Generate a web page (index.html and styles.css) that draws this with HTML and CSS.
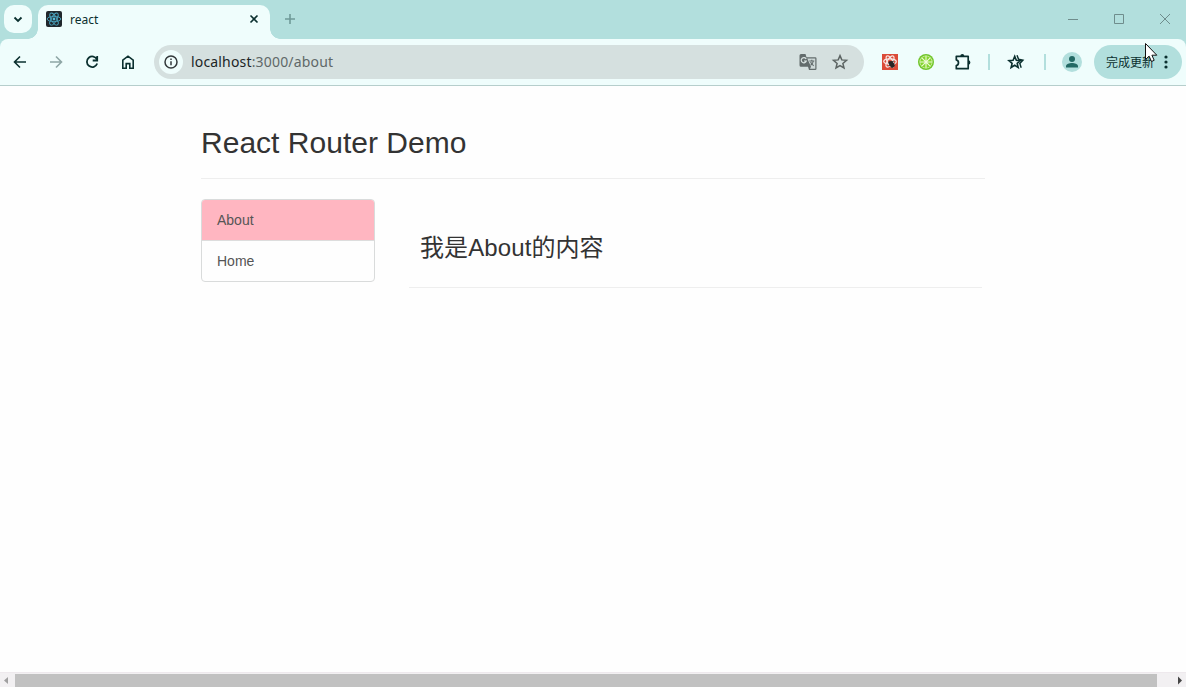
FILE: index.html
```html
<!DOCTYPE html>
<html lang="zh-CN">
<head>
<meta charset="utf-8">
<title>react</title>
<link rel="stylesheet" href="styles.css">
</head>
<body>
<div class="window">
  <header class="titlebar">
    <button class="tab-search" aria-label="Search tabs"><svg width="28" height="28" viewBox="0 0 28 28"><path d="M10.500 12.500 14 16l3.500-3.500" class="stroke2"/></svg></button>
    <div class="tab">
      <svg class="favicon" width="16" height="16" viewBox="0 0 16 16"><rect width="16" height="16" rx="2" fill="#20272c"/><g fill="none" stroke="#4aa5c0" stroke-width=".9"><ellipse cx="8" cy="8" rx="6.800" ry="2.700"/><ellipse cx="8" cy="8" rx="6.800" ry="2.700" transform="rotate(60 8 8)"/><ellipse cx="8" cy="8" rx="6.800" ry="2.700" transform="rotate(120 8 8)"/></g><circle cx="8" cy="8" r="1.400" fill="#58bcd8"/></svg>
      <span class="tab-title">react</span>
      <svg class="tab-close" width="16" height="16" viewBox="0 0 16 16"><path d="m4.500 4.500 7 7m0-7-7 7" class="stroke2 thin"/></svg>
    </div>
    <svg class="new-tab" width="16" height="16" viewBox="0 0 16 16"><path d="M8 3v10M3 8h10" fill="none" stroke="#6f9a98" stroke-width="1.600"/></svg>
    <div class="controls">
      <svg width="46" height="39" viewBox="0 0 46 39"><path d="M18 19.500h10"/></svg>
      <svg width="46" height="39" viewBox="0 0 46 39"><path d="M18.500 14.500h9v9h-9z"/></svg>
      <svg width="46" height="39" viewBox="0 0 46 39"><path d="m18 14 10 10m0-10L18 24"/></svg>
    </div>
  </header>

  <div class="toolbar-backdrop">
  <nav class="toolbar">
    <span class="tool"><svg width="18" height="18" viewBox="0 0 18 18"><path d="M15 9H4M9 3.500 3.500 9 9 14.500" class="stroke2 thin"/></svg></span>
    <span class="tool dim"><svg width="18" height="18" viewBox="0 0 18 18"><path d="M3 9h11M9 3.500 14.500 9 9 14.500" class="stroke2 thin"/></svg></span>
    <span class="tool"><svg width="18" height="18" viewBox="0 0 18 18"><path d="M14 6.500A5.300 5.300 0 1 0 14.200 10.500M14.200 3v4.500H9.700" class="stroke2"/></svg></span>
    <span class="tool"><svg width="18" height="18" viewBox="0 0 18 18"><path d="M3.800 7.200 9 3.200l5.200 4v8.100h-3.400v-4.700H7.200v4.700H3.800z" class="stroke2 thin"/></svg></span>
    <div class="omnibox">
      <span class="site-info"><svg width="16" height="16" viewBox="0 0 16 16"><circle cx="8" cy="8" r="6" fill="none" stroke="#33393b" stroke-width="1.500"/><path d="M8 7.200v4M8 4.500v1.600" stroke="#33393b" stroke-width="1.500"/></svg></span>
      <span class="url">localhost<span class="path">:3000/about</span></span>
      <svg class="translate" width="18" height="18" viewBox="0 0 18 18"><path d="M2 1h4.500l1 3.300h8.700A1.300 1.300 0 0 1 17.500 5.600v10.100a1.300 1.300 0 0 1-1.300 1.300H10l-1-3.300H2A1.500 1.500 0 0 1 .5 12.200V2.500A1.500 1.500 0 0 1 2 1z" fill="#636c6c"/><path d="M8.300 5.500h8v10.300H11l1-2.100z" fill="#cfdad9"/><path d="M7.200 6.100A2.600 2.600 0 1 0 7.300 8H5" fill="none" stroke="#d8e2e0" stroke-width="1.200"/><path d="M10.300 8h5M12.800 6.800V8M14.400 8c-.4 2-1.500 3.300-2.800 4.200M11.600 9c.6 1.500 1.700 2.800 3.100 3.700" fill="none" stroke="#636c6c" stroke-width="1.100"/></svg>
      <svg width="18" height="18" viewBox="0 0 18 18"><path d="m9 2.600 1.800 4.300 4.700.4-3.600 3.100 1.100 4.600-4-2.400L5 15l1.100-4.600-3.600-3.100 4.700-.4z" fill="none" stroke="#5c6463" stroke-width="1.500"/></svg>
    </div>
    <div class="extensions">
      <span class="tool"><svg width="16" height="16" viewBox="0 0 16 16"><rect width="16" height="16" fill="#db4b38"/><g fill="none" stroke="#f9e7e4" stroke-width="1.200"><ellipse cx="8" cy="7.500" rx="6.300" ry="2.600"/><ellipse cx="8" cy="7.500" rx="6.300" ry="2.600" transform="rotate(60 8 7.500)"/><ellipse cx="8" cy="7.500" rx="6.300" ry="2.600" transform="rotate(120 8 7.500)"/></g><ellipse cx="9.700" cy="10.300" rx="2.400" ry="3.400" fill="#292424" transform="rotate(-35 9.700 10.300)"/><path d="m6 9 6-2M6.500 12l6-2.500M9 13.500l4-2M7 7l4 7" stroke="#292424" stroke-width=".8"/></svg></span>
      <span class="tool"><svg width="16" height="16" viewBox="0 0 16 16"><circle cx="8" cy="8" r="8" fill="#70c52a"/><circle cx="8" cy="8" r="6.500" fill="#e5f7ca"/><circle cx="8" cy="8" r="5.900" fill="#84d52e"/><path d="M8 2v12M2 8h12M3.800 3.800l8.400 8.400m0-8.400-8.400 8.400" stroke="#eefad9" stroke-width="1.100"/></svg></span>
      <span class="tool"><svg width="20" height="20" viewBox="0 0 20 20"><path d="M4.800 4.300h11.400v12.400H4.300v-3.200c2.900-.6 2.900-5 0-5.600V4.300z" fill="none" stroke="#0b302f" stroke-width="1.700" stroke-linejoin="round"/><path d="M8.300 4a2 2 0 0 1 4 0zM16.200 8.200a2.200 2.200 0 0 1 0 4.400z" fill="#0b302f"/></svg></span>
      <i class="divider"></i>
      <span class="tool"><svg width="18" height="18" viewBox="0 0 18 18"><path d="m7.700 3.300 1.600 4 4.100.3-3.200 2.800 1 4.100-3.500-2.200-3.600 2.200 1-4.100-3.200-2.800 4.200-.3z" fill="none" stroke="#0b302f" stroke-width="1.600"/><path d="m10 2.200 1.500 3.900 4.500 1.100-3.200 3.300 1.400 4.300" fill="none" stroke="#0b302f" stroke-width="1.400"/></svg></span>
      <i class="divider second"></i>
      <span class="tool"><svg width="20" height="20" viewBox="0 0 20 20"><circle cx="10" cy="10" r="10" fill="#b2dfdd"/><circle cx="10" cy="7" r="3" fill="#236964"/><path d="M4 15.500v-1.400c0-2 3.400-3.100 6-3.100s6 1.100 6 3.100v1.400z" fill="#236964"/></svg></span>
    </div>
    <div class="update"><span>完成更新</span><svg width="4" height="16" viewBox="0 0 4 16"><g fill="#0b302f"><circle cx="2" cy="3" r="1.600"/><circle cx="2" cy="8" r="1.600"/><circle cx="2" cy="13" r="1.600"/></g></svg></div>
  </nav>
  </div>

  <main class="page">
    <h1 class="page-title">React Router Demo</h1>
    <div class="columns">
      <div class="list-group">
        <a class="item active">About</a>
        <a class="item">Home</a>
      </div>
      <section class="panel"><h2>我是About的内容</h2></section>
    </div>
  </main>

  <footer class="scrollbar">
    <svg width="15" height="15" viewBox="0 0 15 15"><path d="M4 7.500 8 4v7z" fill="#a0a0a0"/></svg>
    <div class="thumb"></div>
    <svg class="right" width="15" height="15" viewBox="0 0 15 15"><path d="M11 7.500 7 3.500v8z" fill="#454545"/></svg>
  </footer>
  <svg class="cursor" width="14" height="21" viewBox="0 0 14 21"><path d="M.5.500v16l3.600-3.400L6.500 18.500l2.700-1.200-2.300-5.100h4.900z" fill="#fff" stroke="#111"/></svg>
</div>
</body>
</html>
```
FILE: styles.css
```css
* { box-sizing: border-box; }
body { margin: 0; font-family: "Liberation Sans", "Noto Sans CJK SC", sans-serif; color: #333; }
svg { display: block; flex: none; }
.window { position: relative; width: 1186px; height: 687px; display: flex; flex-direction: column; background: #fefefe; overflow: hidden; }
.stroke2 { fill: none; stroke: #0b302f; stroke-width: 1.8; }
.thin { stroke-width: 1.6; }

.titlebar { height: 39px; flex: none; display: flex; align-items: flex-start; background: #b2dfdd; }
.tab-search { width: 28px; height: 28px; margin: 5px 6px 0 4px; padding: 0; border: 0; border-radius: 10px; background: #effdfc; }
.tab { position: relative; width: 232px; height: 34px; margin-top: 5px; padding: 0 8px; display: flex; align-items: center; border-radius: 10px 10px 0 0; background: #effdfc; }
.tab::before, .tab::after { content: ""; position: absolute; bottom: 0; width: 10px; height: 10px; }
.tab::before { left: -10px; background: radial-gradient(circle at 0 0, transparent 9.500px, #effdfc 10px); }
.tab::after { right: -10px; background: radial-gradient(circle at 100% 0, transparent 9.500px, #effdfc 10px); }
.favicon, .tab-title, .tab-close { position: relative; top: -3px; }
.tab-title { flex: 1; margin-left: 8px; font: 12px "Noto Sans", sans-serif; color: #0b302f; }
.new-tab { margin: 11px 0 0 12px; }
.controls { display: flex; margin-left: auto; margin-right: -2px; }
.controls path { fill: none; stroke: #6f8d8c; }

.toolbar-backdrop { flex: none; background: #b2dfdd; }
.toolbar { height: 47px; display: flex; align-items: center; padding: 0 4px 2px 2px; border-radius: 8px 8px 0 0; background: linear-gradient(#b6cecc, #b6cecc) 0 100% / 100% 1px no-repeat #effdfc; }
.tool { width: 36px; height: 36px; flex: none; display: flex; align-items: center; justify-content: center; }
.dim { opacity: .42; }
.omnibox { width: 710px; height: 34px; margin-left: 8px; padding: 0 15px 0 5px; display: flex; align-items: center; border-radius: 17px; background: #d5e0df; }
.site-info { width: 24px; height: 24px; display: flex; align-items: center; justify-content: center; border-radius: 50%; background: #effdfc; }
.url { flex: 1; margin-left: 8px; font: 14px "Noto Sans", sans-serif; letter-spacing: .17px; color: #202525; }
.path { color: #606868; }
.translate { margin-right: 14px; }
.extensions { display: flex; align-items: center; margin-left: 8px; }
.divider { width: 2px; height: 16px; margin: 0 8px; background: #b2dfdd; }
.divider.second { margin-left: 10px; }
.update { width: 88px; height: 34px; margin-left: 4px; padding: 0 14px 0 12px; display: flex; align-items: center; justify-content: space-between; border-radius: 17px; background: #b2dfdd; font: 12px "Noto Sans CJK SC", sans-serif; color: #0b302f; }

.page { flex: 1; width: 784px; margin-left: 201px; }
.page-title { height: 93px; margin: 0; padding-top: 39px; border-bottom: 1px solid #eee; font-size: 30px; line-height: 35px; font-weight: 400; letter-spacing: .02px; }
.columns { display: flex; align-items: flex-start; margin-top: 20px; }
.list-group { width: 174px; border: 1px solid #d9dbdb; border-radius: 4px; overflow: hidden; }
.item { display: block; height: 40px; padding-left: 15px; font-size: 14px; line-height: 40px; color: #555; }
.item.active { height: 41px; border-bottom: 1px solid #ddd; background: #ffb6c1; }
.panel { width: 573px; height: 89px; margin-left: 34px; padding: 32px 0 0 11px; border-bottom: 1px solid #eee; }
.panel h2 { margin: 0; font-size: 24px; line-height: 33px; font-weight: 400; letter-spacing: .1px; }

.scrollbar { height: 15px; flex: none; display: flex; border-top: 1px solid #eee9ed; background: #f2f0f2; }
.thumb { width: 1142px; height: 13px; margin-top: 1px; background: #c1c1c1; }
.scrollbar .right { margin-left: auto; }
.cursor { position: absolute; left: 1145px; top: 43px; }
```
